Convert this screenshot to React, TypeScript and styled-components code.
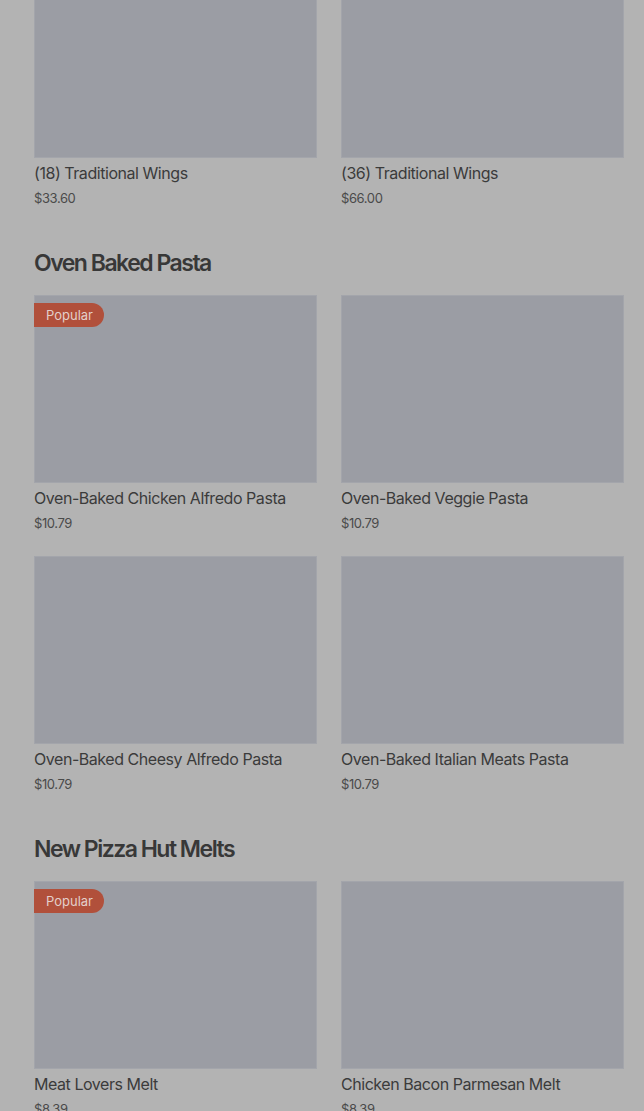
import React from "react";
import styled, { createGlobalStyle } from "styled-components";

type Item = { name: string; price: string; popular?: boolean };
type Section = { title?: string; items: Item[] };

const sections: Section[] = [
  {
    items: [
      { name: "(18) Traditional Wings", price: "$33.60" },
      { name: "(36) Traditional Wings", price: "$66.00" },
    ],
  },
  {
    title: "Oven Baked Pasta",
    items: [
      { name: "Oven-Baked Chicken Alfredo Pasta", price: "$10.79", popular: true },
      { name: "Oven-Baked Veggie Pasta", price: "$10.79" },
      { name: "Oven-Baked Cheesy Alfredo Pasta", price: "$10.79" },
      { name: "Oven-Baked Italian Meats Pasta", price: "$10.79" },
    ],
  },
  {
    title: "New Pizza Hut Melts",
    items: [
      { name: "Meat Lovers Melt", price: "$8.39", popular: true },
      { name: "Chicken Bacon Parmesan Melt", price: "$8.39" },
    ],
  },
];

const GlobalStyle = createGlobalStyle`
  html, body {
    margin: 0;
    padding: 0;
    background: #b3b3b3;
    overflow: hidden;
  }
  body {
    font-family: Inter, "Liberation Sans", sans-serif;
    color: #3a3a3a;
  }
`;

const App = () => (
  <>
    <GlobalStyle />
    <Page>
      {sections.map((section, i) => (
        <Block key={i}>
          {section.title && <Heading>{section.title}</Heading>}
          <Grid>
            {section.items.map((item) => (
              <Card key={item.name}>
                <Picture>{item.popular && <Badge>Popular</Badge>}</Picture>
                <Name>{item.name}</Name>
                <Price>{item.price}</Price>
              </Card>
            ))}
          </Grid>
        </Block>
      ))}
    </Page>
  </>
);

const Page = styled.div`
  margin-top: -30px;
  padding: 0 20px 0 34px;
  display: flex;
  flex-direction: column;
`;

const Block = styled.section`
  display: flex;
  flex-direction: column;
`;

const Heading = styled.h2`
  margin: 40px 0 16px;
  font-size: 23px;
  line-height: 32px;
  font-weight: 600;
  letter-spacing: -1.5px;
  color: #383838;
`;

const Grid = styled.div`
  display: grid;
  grid-template-columns: 283px 283px;
  column-gap: 24px;
  row-gap: 24px;
`;

const Card = styled.div`
  display: flex;
  flex-direction: column;
`;

const Picture = styled.div`
  position: relative;
  height: 188px;
  background: #9b9da4;
  box-shadow: inset 0 0 0 1px #a3a5ab;
`;

const Badge = styled.span`
  position: absolute;
  top: 8px;
  left: 0;
  height: 24px;
  padding: 0 11px 0 12px;
  display: flex;
  align-items: center;
  background: #b1503b;
  color: #e3cfca;
  font-size: 13px;
  border-radius: 0 12px 12px 0;
`;

const Name = styled.div`
  margin-top: 5px;
  font-size: 16px;
  line-height: 20px;
  color: #3b3b3b;
  letter-spacing: -0.45px;
`;

const Price = styled.div`
  margin-top: 6px;
  font-size: 13px;
  line-height: 18px;
  color: #4a4a4a;
  letter-spacing: -0.4px;
`;

export default App;
